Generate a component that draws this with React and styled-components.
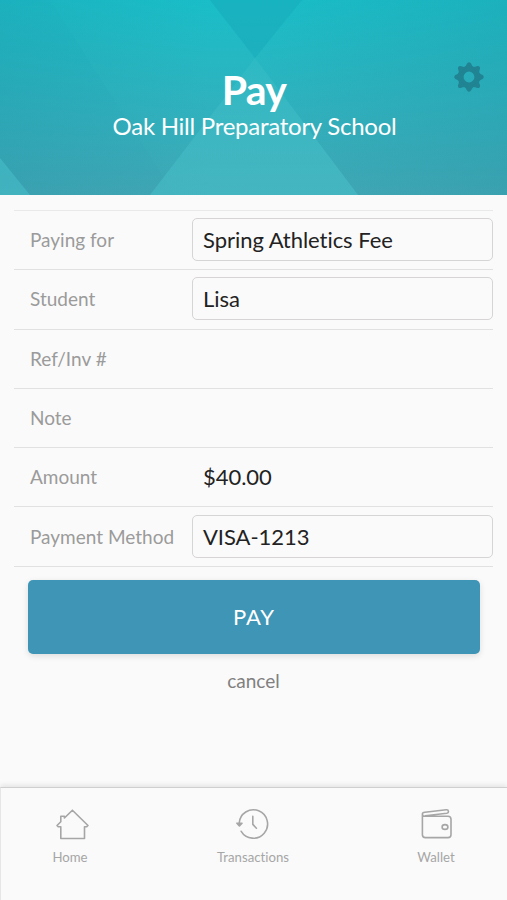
import React from "react";
import styled, { createGlobalStyle } from "styled-components";

const GlobalStyle = createGlobalStyle`
  * { box-sizing: border-box; }
  body { margin: 0; background: #fafafa; }
  button { font: inherit; border: 0; padding: 0; background: none; cursor: pointer; }
`;

const Screen = styled.div`
  width: 507px;
  height: 900px;
  display: flex;
  flex-direction: column;
  overflow: hidden;
  background: #fafafa;
  font-family: Lato, "Liberation Sans", sans-serif;
  font-variant-ligatures: none;
`;

const Header = styled.header`
  position: relative;
  flex: none;
  height: 195px;
  padding-top: 65px;
  text-align: center;
  color: #fff;
`;

const Backdrop = styled.svg`
  position: absolute;
  inset: 0;
  width: 100%;
  height: 100%;
`;

const Title = styled.h1`
  position: relative;
  margin: 0 0 0 1px;
  font-size: 41px;
  font-weight: 700;
  line-height: 50px;
  letter-spacing: -0.7px;
`;

const School = styled.p`
  position: relative;
  margin: -4px 0 0 2px;
  font-size: 24px;
  line-height: 30px;
  letter-spacing: -0.26px;
`;

const SettingsButton = styled.button`
  position: absolute;
  top: 61px;
  right: 22.5px;
  width: 32px;
  height: 32px;
  svg { display: block; }
`;

const Form = styled.main`
  flex: 1;
  padding: 15px 14px 0;
`;

const Fields = styled.div`
  border-top: 1px solid #e9e9e9;
`;

const Row = styled.div`
  display: grid;
  grid-template-columns: 178px 301px;
  align-items: center;
  height: 59.3px;
  padding-bottom: 1px;
  border-bottom: 1px solid #e1e1e1;
`;

const Label = styled.span`
  padding-left: 16px;
  font-size: 19px;
  color: #9b9b9b;
  white-space: nowrap;
`;

const Value = styled.span`
  display: flex;
  align-items: center;
  height: 43px;
  padding: 0 0 0 10px;
  font-size: 22px;
  letter-spacing: -0.04px;
  color: #222;
  border: 1.5px solid ${(p) => (p.$boxed ? "#d6d4d4" : "transparent")};
  border-radius: 5px;
`;

const Actions = styled.div`
  display: flex;
  flex-direction: column;
  align-items: center;
  padding-top: 13px;
`;

const PayButton = styled.button`
  width: 452px;
  height: 74px;
  border-radius: 5px;
  background: #3f95b5;
  box-shadow: 0 2px 6px rgba(0, 0, 0, 0.12);
  && { color: #fff; font-size: 22px; padding-left: 1px; }
  letter-spacing: 0.9px;
`;

const CancelButton = styled.button`
  margin-top: 15px;
  && { font-size: 19px; }
  line-height: 24px;
  color: #808080;
`;

const TabBar = styled.nav`
  flex: none;
  display: flex;
  justify-content: space-between;
  height: 113px;
  padding: 20px 30px 0 28px;
  border-top: 1px solid #cfcfcf;
  border-left: 1px solid #e6e6e6;
  box-shadow: 0 -2px 5px rgba(0, 0, 0, 0.09);
`;

const Tab = styled.button`
  display: flex;
  flex-direction: column;
  align-items: center;
  width: 82px;
  height: 60px;
  color: #a6a6a6;
  && { font-size: 13.2px; }
  svg { display: block; flex: none; overflow: visible; }
`;

const TabLabel = styled.span`
  margin-top: 7px;
  line-height: 16px;
`;

function HeaderBackdrop() {
  return (
    <Backdrop viewBox="0 0 507 195" preserveAspectRatio="none" aria-hidden="true">
      <defs>
        <linearGradient id="base" x1="0" y1="0" x2="0" y2="1">
          <stop offset="0" stopColor="#19bec8" />
          <stop offset="1" stopColor="#42a8b6" />
        </linearGradient>
        <linearGradient id="leftShade" x1="0" y1="0" x2="1" y2="0">
          <stop offset="0" stopColor="#228fa0" stopOpacity="0.24" />
          <stop offset="1" stopColor="#228fa0" stopOpacity="0" />
        </linearGradient>
        <linearGradient id="rightShade" x1="0" y1="0" x2="1" y2="0">
          <stop offset="0" stopColor="#238b9c" stopOpacity="0" />
          <stop offset="1" stopColor="#238b9c" stopOpacity="0.26" />
        </linearGradient>
        <linearGradient id="beam" x1="0" y1="0" x2="0" y2="1">
          <stop offset="0" stopColor="#46c6cc" stopOpacity="0.2" />
          <stop offset="1" stopColor="#45bcc6" stopOpacity="0.65" />
        </linearGradient>
      </defs>
      <rect width="507" height="195" fill="url(#base)" />
      <rect width="210" height="195" fill="url(#leftShade)" />
      <path d="M50 0L175 195H0V0Z" fill="#228fa0" fillOpacity="0.03" />
      <path d="M302 0H507V195H358L255 58Z" fill="url(#rightShade)" />
      <path d="M210 0H302L255 58Z" fill="#18aab9" fillOpacity="0.55" />
      <path d="M255 58L358 195H150Z" fill="url(#beam)" />
      <path d="M0 158L30 195H0Z" fill="#45bcc6" fillOpacity="0.65" />
    </Backdrop>
  );
}

function GearIcon() {
  const teeth = [0, 45, 90, 135, 180, 225, 270, 315];
  return (
    <svg width="32" height="32" viewBox="-16 -16 32 32" fill="#218493">
      <path
        fillRule="evenodd"
        d="M-11 0a11 11 0 1 0 22 0a11 11 0 1 0-22 0M-5.4 0a5.4 5.4 0 1 1 10.8 0a5.4 5.4 0 1 1-10.8 0"
      />
      {teeth.map((a) => (
        <path key={a} d="M-5.4-9Q-2.8-11-2-13.6Q0-16 2-13.6Q2.8-11 5.4-9Z" transform={`rotate(${a})`} />
      ))}
    </svg>
  );
}

const stroke = { fill: "none", stroke: "currentColor", strokeWidth: 1.6, strokeLinejoin: "round", strokeLinecap: "round" };

function HomeIcon() {
  return (
    <svg width="34" height="34" viewBox="0 0 34 34" {...stroke}>
      <path d="M19.4 2.2L35 17.5L33.5 18.8H31.5V30.5H7.8V18.8H5.2L4 17.5L7.8 13.8V8.2H11.4V10Z" />
    </svg>
  );
}

function HistoryIcon() {
  return (
    <svg width="34" height="34" viewBox="0 0 34 34" {...stroke}>
      <path d="M3.2 15.2A14.2 14.2 0 1 1 5.2 23.3" />
      <path d="M16.8 8.4V16.4L20.4 20.2" />
      <path d="M0.9 15.2H6L3.4 17.9Z" fill="currentColor" />
    </svg>
  );
}

function WalletIcon() {
  return (
    <svg width="34" height="34" viewBox="0 0 34 34" {...stroke}>
      <path d="M3.4 5.8V26.8Q3.4 29.6 6.4 29.6H29Q32 29.6 32 26.8V11.3Q32 8.3 29 8.3H5.9Q3.4 8.3 3.4 5.9Q3.4 4.7 5.9 4.3L27.2 1.8Q29.3 1.6 29.5 3.5Q29.5 4.9 27.8 5.3L6.4 7.8" />
      <ellipse cx="26" cy="19" rx="2.9" ry="2.4" />
    </svg>
  );
}

const fields = [
  { label: "Paying for", value: "Spring Athletics Fee", boxed: true },
  { label: "Student", value: "Lisa", boxed: true },
  { label: "Ref/Inv #", value: "" },
  { label: "Note", value: "" },
  { label: "Amount", value: "$40.00" },
  { label: "Payment Method", value: "VISA-1213", boxed: true },
];

const tabs = [
  { label: "Home", Icon: HomeIcon },
  { label: "Transactions", Icon: HistoryIcon },
  { label: "Wallet", Icon: WalletIcon },
];

export default function App() {
  return (
    <Screen>
      <GlobalStyle />
      <Header>
        <HeaderBackdrop />
        <Title>Pay</Title>
        <School>Oak Hill Preparatory School</School>
        <SettingsButton aria-label="Settings">
          <GearIcon />
        </SettingsButton>
      </Header>
      <Form>
        <Fields>
          {fields.map((f) => (
            <Row key={f.label}>
              <Label>{f.label}</Label>
              <Value $boxed={f.boxed}>{f.value}</Value>
            </Row>
          ))}
        </Fields>
        <Actions>
          <PayButton>PAY</PayButton>
          <CancelButton>cancel</CancelButton>
        </Actions>
      </Form>
      <TabBar>
        {tabs.map(({ label, Icon }) => (
          <Tab key={label}>
            <Icon />
            <TabLabel>{label}</TabLabel>
          </Tab>
        ))}
      </TabBar>
    </Screen>
  );
}
